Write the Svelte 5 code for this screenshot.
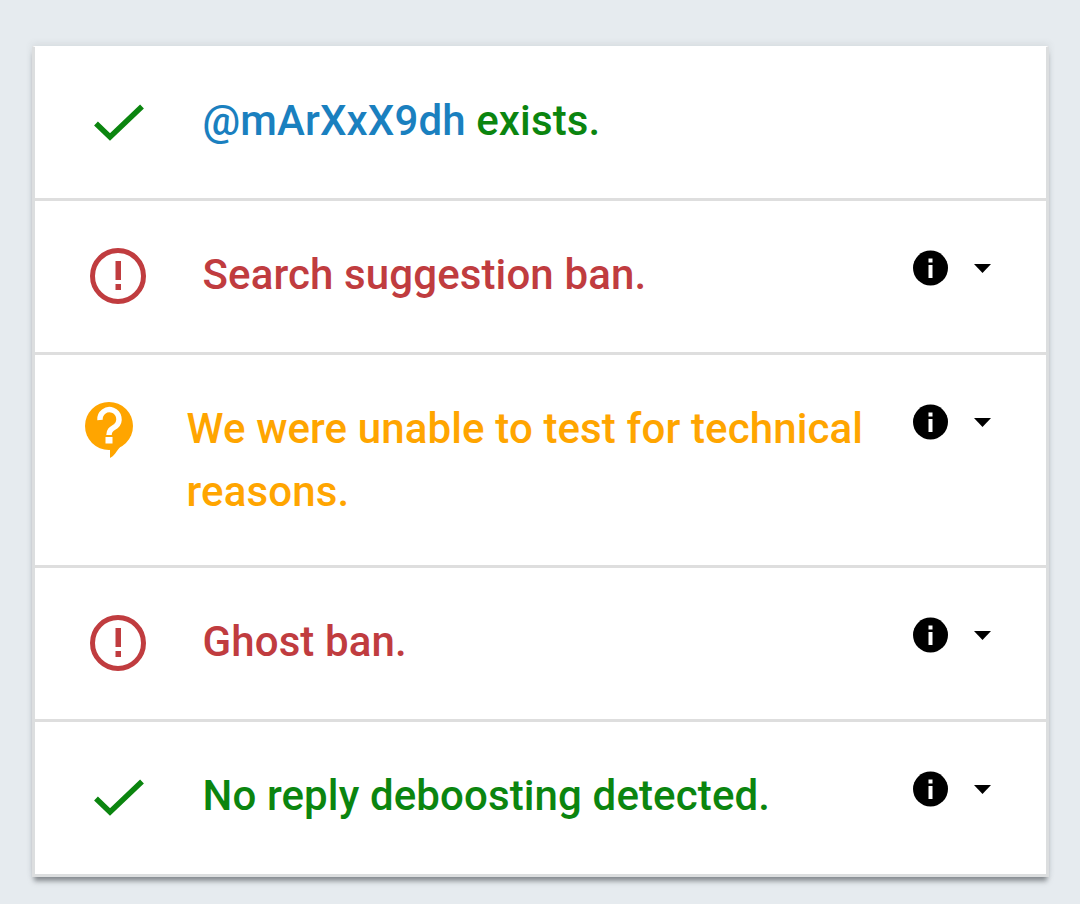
<script>
  const rows = [
    { icon: 'check', color: 'green', parts: [{ text: '@mArXxX9dh', link: true }, { text: ' exists.' }], info: false },
    { icon: 'ban', color: 'red', parts: [{ text: 'Search suggestion ban.' }], info: true },
    { icon: 'unknown', color: 'orange', parts: [{ text: 'We were unable to test for technical reasons.' }], info: true },
    { icon: 'ban', color: 'red', parts: [{ text: 'Ghost ban.' }], info: true },
    { icon: 'check', color: 'green', parts: [{ text: 'No reply deboosting detected.' }], info: true }
  ];
</script>

<div class="page">
  <div class="card">
    {#each rows as row}
      <div class="row {row.color}" class:wide={row.icon === 'unknown'}>
        <div class="status">
          {#if row.icon === 'check'}
            <svg width="52" height="40" viewBox="0 0 52 40"><path d="M3 19.5 L17 33 L49 2.500" fill="none" stroke="currentColor" stroke-width="5.500" /></svg>
          {:else if row.icon === 'ban'}
            <svg width="58" height="58" viewBox="0 0 58 58">
              <circle cx="29" cy="29" r="25.500" fill="none" stroke="currentColor" stroke-width="5" />
              <rect x="26.500" y="14" width="5.500" height="19" fill="currentColor" />
              <rect x="26.500" y="37" width="5.500" height="6" fill="currentColor" />
            </svg>
          {:else}
            <svg width="50" height="58" viewBox="0 0 50 58">
              <circle cx="24" cy="24" r="24" fill="currentColor" />
              <path d="M35 45 C31 50 29 54 25 56 V46 Z" fill="currentColor" />
              <path d="M15 18 A9.500 9.500 0 1 1 31 24 C26.500 27 24 28 24 33" fill="none" stroke="#fff" stroke-width="5.500" />
              <rect x="20.500" y="35" width="7" height="6.500" fill="#fff" />
            </svg>
          {/if}
        </div>
        <div class="message">
          {#each row.parts as part}
            {#if part.link}<span class="handle">{part.text}</span>{:else}{part.text}{/if}
          {/each}
        </div>
        {#if row.info}
          <div class="actions">
            <svg width="35" height="36" viewBox="0 0 35 36">
              <circle cx="17.500" cy="18" r="17.500" fill="#000" />
              <rect x="15.500" y="8.500" width="4" height="4" fill="#fff" />
              <rect x="15.500" y="15" width="4" height="13" fill="#fff" />
            </svg>
            <svg class="caret" width="17" height="9" viewBox="0 0 17 9"><path d="M0 0 H17 L8.500 9 Z" fill="#000" /></svg>
          </div>
        {/if}
      </div>
    {/each}
  </div>
</div>

<style>
  :global(body) {
    background: #e6ebef;
  }

  .page {
    height: 904px;
    padding: 46px 31px 0 32px;
    box-sizing: border-box;
    font-family: Roboto, sans-serif;
  }

  .card {
    background: #fff;
    border: 3px solid #dcdedf;
    border-top: 1px solid #fff;
    box-shadow: 0 6px 5px -2px rgba(70, 75, 80, 0.6), 0 -2px 7px rgba(70, 75, 80, 0.1);
  }

  .row {
    height: 151px;
    display: flex;
    align-items: flex-start;
    border-bottom: 3px solid #dedede;
  }

  .row:last-child {
    border-bottom: 0;
    height: 152px;
  }

  .row.wide {
    height: 210px;
  }

  .green { color: #0b850f; }
  .red { color: #c03c3f; }
  .orange { color: #ffa500; }

  .status {
    width: 168px;
    flex: none;
    display: flex;
    justify-content: center;
    padding-top: 57px;
    box-sizing: border-box;
  }

  .red .status {
    padding-top: 46px;
    padding-right: 2px;
  }

  .wide .status {
    width: 152px;
    padding-top: 47px;
    padding-right: 2px;
  }

  .message {
    flex: 1;
    font-size: 42px;
    font-weight: 500;
    letter-spacing: 0.12px;
    line-height: 63px;
    padding-top: 42px;
    margin-left: -0.5px;
  }

  .handle {
    color: #1a80bf;
  }

  .actions {
    flex: none;
    width: 133px;
    display: flex;
    align-items: flex-start;
    gap: 26px;
    padding-top: 49px;
    box-sizing: border-box;
  }

  .caret {
    margin-top: 14px;
  }
</style>
